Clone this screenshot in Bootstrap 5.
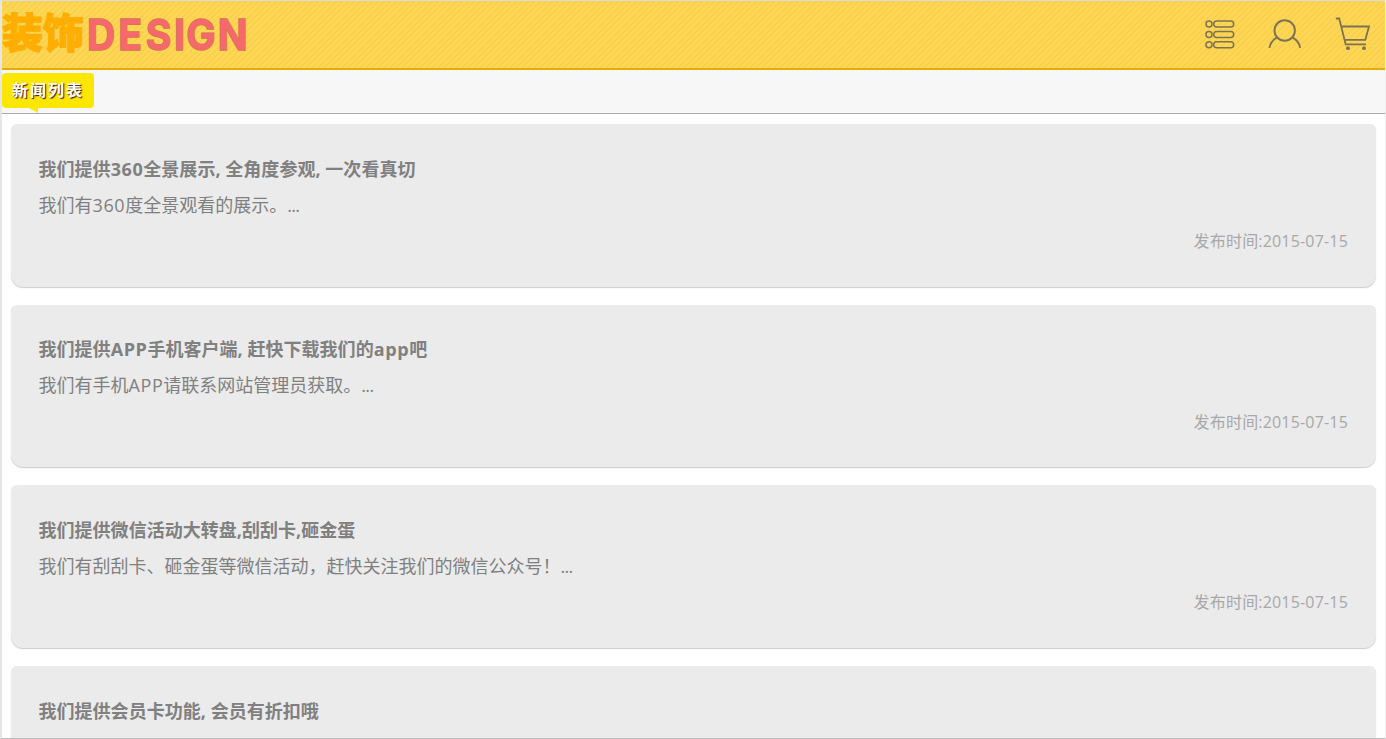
<!DOCTYPE html>
<html lang="zh-CN">
<head>
<meta charset="utf-8">
<meta name="viewport" content="width=device-width, initial-scale=1">
<title>新闻列表</title>
<link href="https://cdn.jsdelivr.net/npm/bootstrap@5.3.0/dist/css/bootstrap.min.css" rel="stylesheet">
<style>
  body { font-family: "Open Sans", "Noto Sans CJK SC", sans-serif; color: #808080; font-size: 18px; }
  .page-frame { height: 739px; border: 1px solid #dcdcdc; border-left: 2px solid #e6e6e6; border-right-color: #eee; border-bottom-color: #bbb; }
  .topbar { height: 69px; border-bottom: 2px solid #e0ad0c; background: #ffd64f repeating-linear-gradient(135deg, #ffd651 0 2.6px, #f3cb51 3.3px 3.5px, #ffd651 4.2426px); }
  .topbar svg { display: block; }
  .section-bar { height: 44px; background: #f7f7f7; border-bottom: 1px solid #aaa; padding-top: 3px; }
  .section-tag { width: 92px; height: 35px; line-height: 34px; background: #fde600; color: #fff; border-radius: 4px; font-size: 16px; letter-spacing: 2px; padding-left: 10px; text-shadow: 1px 1px 1px #411; }
  .section-tag::after { content: ""; position: absolute; left: 27px; top: 35px; border-top: 5px solid #fde600; border-left: 9px solid transparent; }
  .news-list { padding: 10px 9px 0; gap: 17.7px; }
  .news-item { flex: 0 0 162.9px; background: #ebebeb; border-radius: 6px 6px 12px 12px; padding: 26.8px 28px 0 27.5px; box-shadow: 0 1px 1px rgba(0,0,0,.2); color: inherit; }
  .news-item h2 { font-size: 18px; line-height: 36px; letter-spacing: .03px; }
  .news-item p { line-height: 36.4px; }
  .news-item time { font-size: 16px; line-height: 36px; color: #a8a8a8; letter-spacing: .18px; }
  .wide-latin { letter-spacing: .6px; }
  .ellipsis-dots { letter-spacing: -.7px; }
</style>
</head>
<body>
<div class="page-frame overflow-hidden d-flex flex-column">
  <header class="topbar flex-shrink-0 d-flex justify-content-between">
    <svg width="250" height="67" role="img" aria-label="装饰DESIGN">
      <text x="0" y="47" font-family="Noto Sans CJK SC" font-weight="900" font-size="41" fill="#ffae00" stroke="#ffae00" stroke-width="1.2" textLength="82" lengthAdjust="spacingAndGlyphs">装饰</text>
      <text transform="scale(.93 1)" x="91.5 125 154.5 185 198 232" y="49" font-family="Inter" font-weight="700" font-size="42" fill="#f6686c" stroke="#c9764f" stroke-width="1.4" paint-order="stroke">DESIGN</text>
    </svg>
    <nav>
      <svg width="200" height="67" viewBox="1185 1 200 67" fill="none" stroke="#7c7355" stroke-width="1.5">
        <g>
          <circle cx="1209" cy="24" r="3"/><rect x="1213.7" y="21" width="20" height="6" rx="3"/>
          <circle cx="1209" cy="34.5" r="3"/><rect x="1213.7" y="31.5" width="20" height="6" rx="3"/>
          <circle cx="1209" cy="44.8" r="3"/><rect x="1213.7" y="41.8" width="20" height="6" rx="3"/>
        </g>
        <g stroke-width="1.9"><circle cx="1284.7" cy="30.5" r="10.2"/><path d="M1277 37.4Q1270.5 41 1269.4 47.8M1292.4 37.4Q1299 41 1300.2 47.8"/></g>
        <g stroke-width="1.8"><path d="M1335.8 18.5H1339.2L1345.7 44.4H1366M1341.3 26.5H1369L1365.3 39.8H1344.5"/></g>
        <g fill="#7c7355" stroke="none"><circle cx="1348" cy="48.2" r="1.9"/><circle cx="1364" cy="48.2" r="1.9"/></g>
      </svg>
    </nav>
  </header>
  <div class="section-bar flex-shrink-0"><div class="section-tag position-relative fw-bold text-nowrap">新闻列表</div></div>
  <main class="news-list d-flex flex-column">
    <article class="news-item d-flex flex-column">
      <h2 class="fw-bold m-0">我们提供<span class="wide-latin">360</span>全景展示, 全角度参观, 一次看真切</h2>
      <p class="m-0">我们有<span class="wide-latin">360</span>度全景观看的展示。<span class="ellipsis-dots">...</span></p>
      <time class="align-self-end">发布时间:2015-07-15</time>
    </article>
    <article class="news-item d-flex flex-column">
      <h2 class="fw-bold m-0">我们提供<span class="wide-latin">APP</span>手机客户端, 赶快下载我们的<span class="wide-latin">app</span>吧</h2>
      <p class="m-0">我们有手机<span class="wide-latin">APP</span>请联系网站管理员获取。<span class="ellipsis-dots">...</span></p>
      <time class="align-self-end">发布时间:2015-07-15</time>
    </article>
    <article class="news-item d-flex flex-column">
      <h2 class="fw-bold m-0">我们提供微信活动大转盘,刮刮卡,砸金蛋</h2>
      <p class="m-0">我们有刮刮卡、砸金蛋等微信活动，赶快关注我们的微信公众号！<span class="ellipsis-dots">...</span></p>
      <time class="align-self-end">发布时间:2015-07-15</time>
    </article>
    <article class="news-item d-flex flex-column">
      <h2 class="fw-bold m-0">我们提供会员卡功能, 会员有折扣哦</h2>
    </article>
  </main>
</div>
<script src="https://cdn.jsdelivr.net/npm/bootstrap@5.3.0/dist/js/bootstrap.bundle.min.js"></script>
</body>
</html>
